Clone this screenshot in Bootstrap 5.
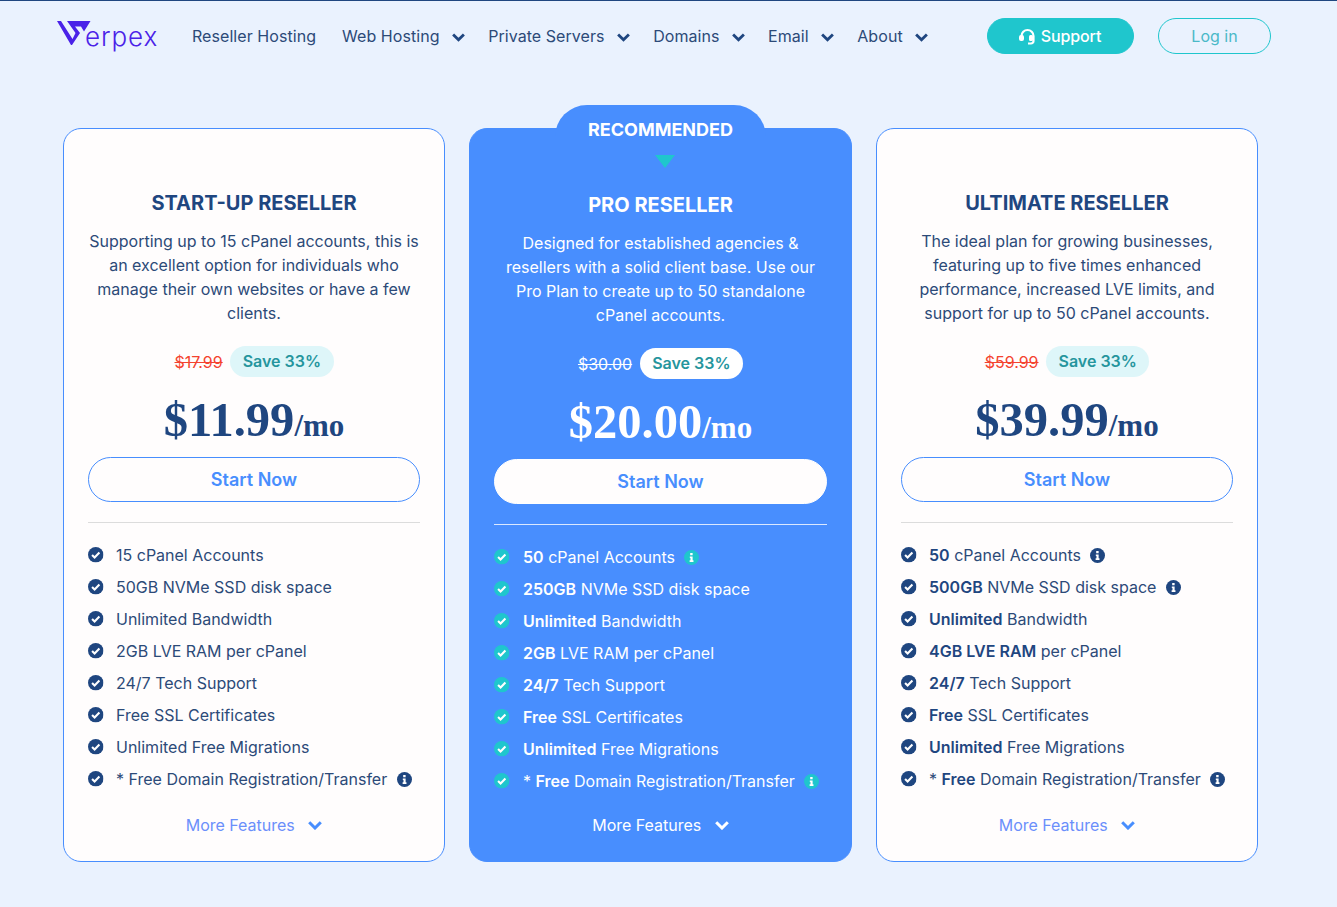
<!DOCTYPE html>
<html lang="en">
<head>
    <meta charset="UTF-8">
    <title>Reseller Hosting</title>
    <meta name="viewport" content="width=device-width, initial-scale=1">
    <link href="https://cdn.jsdelivr.net/npm/bootstrap@5.3.2/dist/css/bootstrap.min.css" rel="stylesheet">
    <style>
        body {
            background: #eaf2fe;
            border-top: 1px solid #1f4680;
            font-family: "Inter", "Liberation Sans", sans-serif;
            font-size: 16px;
            color: #1f4680;
        }

        .top-bar { height: 71px; padding: 17px 66px 0 57px; }
        .brand { width: 101px; height: 36px; color: #4a22e8; text-decoration: none; font-weight: 300; font-size: 26px; line-height: 36px; letter-spacing: .9px; }
        .brand svg { width: 34px; height: 24px; margin-top: 3px; }
        .brand span { margin-left: -6px; padding-top: 1px; }
        .menu { margin-left: 34px; gap: 26px; }
        .menu a { color: #2c4a78; text-decoration: none; line-height: 36px; letter-spacing: .06px; }
        .menu svg { width: 13px; height: 9px; margin-left: 8px; margin-right: -3px; color: #1f4680; }
        .btn-support, .btn-login { height: 36px; border-radius: 18px; padding: 0; line-height: 34px; font-size: 16px; }
        .btn-support { width: 147px; background: #1fc6cd; border: 1px solid #1fc6cd; color: #fff; font-weight: 500; margin-left: auto; letter-spacing: -.1px; }
        .btn-support svg { width: 17px; height: 17px; margin-right: 5px; margin-left: -1px; vertical-align: -3px; }
        .btn-login { width: 113px; border: 1px solid #1fc6cd; color: #4ab9c8; margin-left: 24px; }

        .plans { padding: 56px 79px 0 63px; gap: 24px; }
        .plan { width: 382px; height: 734px; background: #fffdfd; border: 1px solid #488efe; border-radius: 18px; padding: 61px 24px 0; position: relative; color: #2c4a78; }
        .plan-pro { width: 383px; background: #488efe; color: #fff; padding-top: 63px; }
        .plan-tab { position: absolute; top: -24px; left: 85px; width: 211px; height: 60px; background: #488efe; border-radius: 32px 32px 0 0; text-align: center; font-weight: 700; font-size: 18px; padding-top: 13px; line-height: 24px; }
        .plan-tab::after { content: ""; position: absolute; left: 100px; top: 50px; border-style: solid; border-width: 13px 10px 0; border-color: #1fc6cd transparent transparent; }
        .plan h2 { font-size: 20px; font-weight: 700; line-height: 26px; text-align: center; margin: 0 0 13px; color: #1f4680; }
        .plan-pro h2 { color: #fff; }
        .blurb { line-height: 24px; text-align: center; margin: 0 -6px 21px; height: 96px; }
        .plan-pro .blurb { margin-left: 0; margin-right: 0; }
        .old-price { color: #f4432f; text-decoration: line-through; }
        .plan-pro .old-price { color: #fff; }
        .save { background: #def6f9; color: #25959d; font-weight: 600; border-radius: 16px; height: 31px; line-height: 31px; padding: 0 12.500px; margin-left: 7.500px; }
        .plan-pro .save { background: #fff; color: #25959d; }
        .amount { font-family: "Liberation Serif", serif; font-weight: 700; color: #1f4680; text-align: center; font-size: 48.500px; line-height: 60px; margin: 13px 0 7px; height: 60px; }
        .plan-pro .amount { color: #fff; }
        .amount small { font-size: 31px; }
        .start { display: block; height: 45px; border: 1px solid #488efe; border-radius: 23px; background: #fffdfd; color: #488efe; font-weight: 600; font-size: 18px; line-height: 43px; padding: 0; width: 100%; }
        .start:hover { background: #fffdfd; color: #488efe; }
        .plan-pro .start { border-color: #fff; }
        .plan hr { border-top: 1px solid #dcdcdc; opacity: 1; margin: 20px 0 16px; }
        .plan-pro hr { border-top-color: #dbe8ff; }
        .feats { list-style: none; margin: 0; padding: 0; line-height: 32px; }
        .feats li { display: flex; align-items: center; height: 32px; white-space: nowrap; }
        .feats b { font-weight: 600; color: #1f4680; }
        .plan-pro .feats b { color: #fff; }
        .tick { width: 15.500px; height: 15.500px; margin-right: 12.500px; flex: none; color: #1f4680; }
        .info { width: 15px; height: 15px; margin-left: 9.500px; flex: none; color: #1f4680; }
        .plan-pro .tick { margin-right: 13.500px; }
        .plan-pro .info { margin-left: 9px; }
        .tick.teal, .info.teal { color: #1fc6cd; }
        .more { text-align: center; margin-top: 18px; color: #6b8ffb; line-height: 24px; }
        .plan-pro .more { color: #fff; margin-top: 16px; }
        .more svg { width: 14px; height: 9px; margin-left: 9px; color: #488efe; vertical-align: 1px; }
        .plan-pro .more svg { color: #fff; }
    </style>
</head>

<body>

<svg width="0" height="0" class="position-absolute">
    <symbol id="ico-tick" viewBox="0 0 16 16">
        <circle cx="8" cy="8" r="8" fill="currentColor"/>
        <path d="M4.2 8.3l2.6 2.5 5-5" fill="none" stroke="#fff" stroke-width="2.2"/>
    </symbol>
    <symbol id="ico-info" viewBox="0 0 16 16">
        <circle cx="8" cy="8" r="8" fill="currentColor"/>
        <path d="M6.6 3.2h2.6v2.4H6.6zM6.2 6.8h3v4.2h.9v1.7H6v-1.700h.9V8.500h-.7z" fill="#fff"/>
    </symbol>
    <symbol id="ico-down" viewBox="0 0 14 9">
        <path d="M1.2 1.2L7 7l5.8-5.800" fill="none" stroke="currentColor" stroke-width="3"/>
    </symbol>
</svg>

<nav class="top-bar d-flex align-items-start">
    <a class="brand d-flex flex-shrink-0" href="#">
        <svg viewBox="0 0 34 24" class="flex-shrink-0">
            <path d="M0 0h4l11.500 18 3-6L10 0h23.500l-6.500 10.500-3-5h-6l5 6.500-8 12h-1z" fill="currentColor"/>
        </svg>
        <span>erpex</span>
    </a>
    <div class="menu d-flex">
        <a href="#">Reseller Hosting</a>
        <a href="#">Web Hosting <svg><use href="#ico-down"/></svg></a>
        <a href="#">Private Servers <svg><use href="#ico-down"/></svg></a>
        <a href="#">Domains <svg><use href="#ico-down"/></svg></a>
        <a href="#">Email <svg><use href="#ico-down"/></svg></a>
        <a href="#">About <svg><use href="#ico-down"/></svg></a>
    </div>
    <a class="btn btn-support" href="#">
        <svg viewBox="0 0 17 17"><path d="M2.500 9V8a6 6 0 0 1 12 0v5a2.500 2.500 0 0 1-2.500 2.500H9" fill="none" stroke="#fff" stroke-width="2.200"/><rect x="0" y="7" width="5" height="6" rx="2" fill="#fff"/><rect x="10" y="7" width="4" height="6" rx="1.500" fill="#fff"/></svg>Support
    </a>
    <a class="btn btn-login" href="#">Log in</a>
</nav>

<main class="plans d-flex align-items-start">
    <section class="plan">
        <h2>START-UP RESELLER</h2>
        <p class="blurb">Supporting up to 15 cPanel accounts, this is an excellent option for individuals who manage their own websites or have a few clients.</p>
        <div class="d-flex justify-content-center align-items-center"><span class="old-price">$17.99</span><span class="save">Save 33%</span></div>
        <div class="amount">$11.99<small>/mo</small></div>
        <a class="btn start" href="#">Start Now</a>
        <hr>
        <ul class="feats">
            <li><svg class="tick"><use href="#ico-tick"/></svg>15 cPanel Accounts</li>
            <li><svg class="tick"><use href="#ico-tick"/></svg>50GB NVMe SSD disk space</li>
            <li><svg class="tick"><use href="#ico-tick"/></svg>Unlimited Bandwidth</li>
            <li><svg class="tick"><use href="#ico-tick"/></svg>2GB LVE RAM per cPanel</li>
            <li><svg class="tick"><use href="#ico-tick"/></svg>24/7 Tech Support</li>
            <li><svg class="tick"><use href="#ico-tick"/></svg>Free SSL Certificates</li>
            <li><svg class="tick"><use href="#ico-tick"/></svg>Unlimited Free Migrations</li>
            <li><svg class="tick"><use href="#ico-tick"/></svg>* Free Domain Registration/Transfer<svg class="info"><use href="#ico-info"/></svg></li>
        </ul>
        <div class="more">More Features <svg><use href="#ico-down"/></svg></div>
    </section>

    <section class="plan plan-pro">
        <div class="plan-tab">RECOMMENDED</div>
        <h2>PRO RESELLER</h2>
        <p class="blurb">Designed for established agencies &amp; resellers with a solid client base. Use our Pro Plan to create up to 50 standalone cPanel accounts.</p>
        <div class="d-flex justify-content-center align-items-center"><span class="old-price">$30.00</span><span class="save">Save 33%</span></div>
        <div class="amount">$20.00<small>/mo</small></div>
        <a class="btn start" href="#">Start Now</a>
        <hr>
        <ul class="feats">
            <li><svg class="tick teal"><use href="#ico-tick"/></svg><span><b>50</b> cPanel Accounts</span><svg class="info teal"><use href="#ico-info"/></svg></li>
            <li><svg class="tick teal"><use href="#ico-tick"/></svg><span><b>250GB</b> NVMe SSD disk space</span></li>
            <li><svg class="tick teal"><use href="#ico-tick"/></svg><span><b>Unlimited</b> Bandwidth</span></li>
            <li><svg class="tick teal"><use href="#ico-tick"/></svg><span><b>2GB</b> LVE RAM per cPanel</span></li>
            <li><svg class="tick teal"><use href="#ico-tick"/></svg><span><b>24/7</b> Tech Support</span></li>
            <li><svg class="tick teal"><use href="#ico-tick"/></svg><span><b>Free</b> SSL Certificates</span></li>
            <li><svg class="tick teal"><use href="#ico-tick"/></svg><span><b>Unlimited</b> Free Migrations</span></li>
            <li><svg class="tick teal"><use href="#ico-tick"/></svg><span>* <b>Free</b> Domain Registration/Transfer</span><svg class="info teal"><use href="#ico-info"/></svg></li>
        </ul>
        <div class="more">More Features <svg><use href="#ico-down"/></svg></div>
    </section>

    <section class="plan">
        <h2>ULTIMATE RESELLER</h2>
        <p class="blurb">The ideal plan for growing businesses, featuring up to five times enhanced performance, increased LVE limits, and support for up to 50 cPanel accounts.</p>
        <div class="d-flex justify-content-center align-items-center"><span class="old-price">$59.99</span><span class="save">Save 33%</span></div>
        <div class="amount">$39.99<small>/mo</small></div>
        <a class="btn start" href="#">Start Now</a>
        <hr>
        <ul class="feats">
            <li><svg class="tick"><use href="#ico-tick"/></svg><span><b>50</b> cPanel Accounts</span><svg class="info"><use href="#ico-info"/></svg></li>
            <li><svg class="tick"><use href="#ico-tick"/></svg><span><b>500GB</b> NVMe SSD disk space</span><svg class="info"><use href="#ico-info"/></svg></li>
            <li><svg class="tick"><use href="#ico-tick"/></svg><span><b>Unlimited</b> Bandwidth</span></li>
            <li><svg class="tick"><use href="#ico-tick"/></svg><span><b>4GB LVE RAM</b> per cPanel</span></li>
            <li><svg class="tick"><use href="#ico-tick"/></svg><span><b>24/7</b> Tech Support</span></li>
            <li><svg class="tick"><use href="#ico-tick"/></svg><span><b>Free</b> SSL Certificates</span></li>
            <li><svg class="tick"><use href="#ico-tick"/></svg><span><b>Unlimited</b> Free Migrations</span></li>
            <li><svg class="tick"><use href="#ico-tick"/></svg><span>* <b>Free</b> Domain Registration/Transfer</span><svg class="info"><use href="#ico-info"/></svg></li>
        </ul>
        <div class="more">More Features <svg><use href="#ico-down"/></svg></div>
    </section>
</main>

<script src="https://cdn.jsdelivr.net/npm/bootstrap@5.3.2/dist/js/bootstrap.bundle.min.js"></script>
</body>
</html>
